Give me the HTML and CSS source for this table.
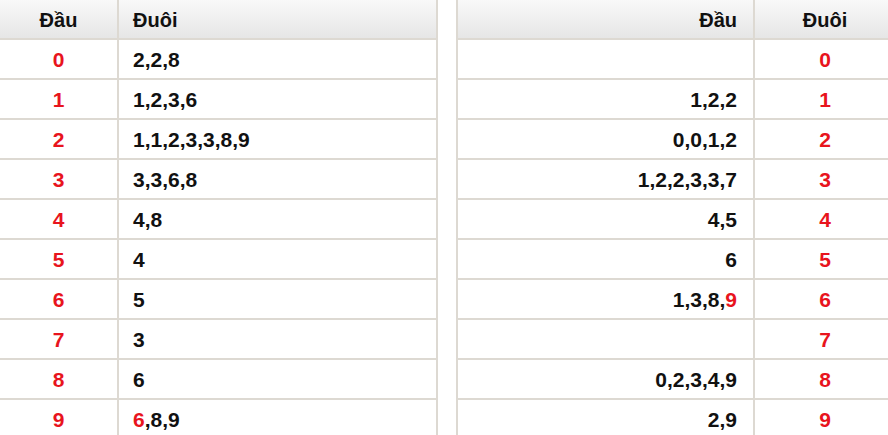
FILE: index.html
```html
<!DOCTYPE html>
<html>
<head>
<meta charset="utf-8">
<link rel="stylesheet" href="styles.css">
</head>
<body>
<div class="wrap">
  <div class="tbl tbl-left">
    <div class="row head">
      <div class="c c1 center">Đầu</div>
      <div class="c c2 left">Đuôi</div>
    </div>
    <div class="row"><div class="c c1 center red">0</div><div class="c c2 left">2,2,8</div></div>
    <div class="row"><div class="c c1 center red">1</div><div class="c c2 left">1,2,3,6</div></div>
    <div class="row"><div class="c c1 center red">2</div><div class="c c2 left">1,1,2,3,3,8,9</div></div>
    <div class="row"><div class="c c1 center red">3</div><div class="c c2 left">3,3,6,8</div></div>
    <div class="row"><div class="c c1 center red">4</div><div class="c c2 left">4,8</div></div>
    <div class="row"><div class="c c1 center red">5</div><div class="c c2 left">4</div></div>
    <div class="row"><div class="c c1 center red">6</div><div class="c c2 left">5</div></div>
    <div class="row"><div class="c c1 center red">7</div><div class="c c2 left">3</div></div>
    <div class="row"><div class="c c1 center red">8</div><div class="c c2 left">6</div></div>
    <div class="row"><div class="c c1 center red">9</div><div class="c c2 left"><span class="red">6</span>,8,9</div></div>
  </div>
  <div class="tbl tbl-right">
    <div class="row head">
      <div class="c c1 right">Đầu</div>
      <div class="c c2 center">Đuôi</div>
    </div>
    <div class="row"><div class="c c1 right"></div><div class="c c2 center red">0</div></div>
    <div class="row"><div class="c c1 right">1,2,2</div><div class="c c2 center red">1</div></div>
    <div class="row"><div class="c c1 right">0,0,1,2</div><div class="c c2 center red">2</div></div>
    <div class="row"><div class="c c1 right">1,2,2,3,3,7</div><div class="c c2 center red">3</div></div>
    <div class="row"><div class="c c1 right">4,5</div><div class="c c2 center red">4</div></div>
    <div class="row"><div class="c c1 right">6</div><div class="c c2 center red">5</div></div>
    <div class="row"><div class="c c1 right">1,3,8,<span class="red">9</span></div><div class="c c2 center red">6</div></div>
    <div class="row"><div class="c c1 right"></div><div class="c c2 center red">7</div></div>
    <div class="row"><div class="c c1 right">0,2,3,4,9</div><div class="c c2 center red">8</div></div>
    <div class="row"><div class="c c1 right">2,9</div><div class="c c2 center red">9</div></div>
  </div>
</div>
</body>
</html>
```

FILE: styles.css
```css
html, body {
  margin: 0;
  padding: 0;
  background: #ffffff;
  overflow: hidden;
}
body {
  font-family: "Liberation Sans", Arial, sans-serif;
  font-weight: bold;
  font-size: 21px;
  color: #111111;
}
.wrap {
  display: flex;
  gap: 18px;
  width: 900px;
}
.tbl {
  display: flex;
  flex-direction: column;
  flex: none;
}
.tbl-left {
  width: 436px;
  border-right: 2px solid #ddd9d2;
}
.tbl-right {
  width: 437px;
  border-left: 2px solid #ddd9d2;
}
.row {
  display: flex;
  height: 38px;
  border-bottom: 2px solid #ddd9d2;
  background: #ffffff;
}
.row.head {
  height: 38px;
  font-size: 20px;
  background: linear-gradient(#f9f9f9, #e6e6e6);
}
.c {
  display: flex;
  align-items: center;
  height: 100%;
  padding-top: 1px;
  box-sizing: border-box;
}
.head .c {
  padding-top: 2px;
}
.tbl-left .c1 {
  width: 119px;
  border-right: 2px solid #ddd9d2;
  flex: none;
}
.tbl-left .c2 {
  flex: 1;
  padding-left: 14px;
}
.tbl-right .c1 {
  width: 297px;
  border-right: 2px solid #ddd9d2;
  flex: none;
  padding-right: 16px;
}
.tbl-right .c2 {
  flex: 1;
}
.center { justify-content: center; }
.left { justify-content: flex-start; }
.right { justify-content: flex-end; }
.red { color: #e8141d; }
```
